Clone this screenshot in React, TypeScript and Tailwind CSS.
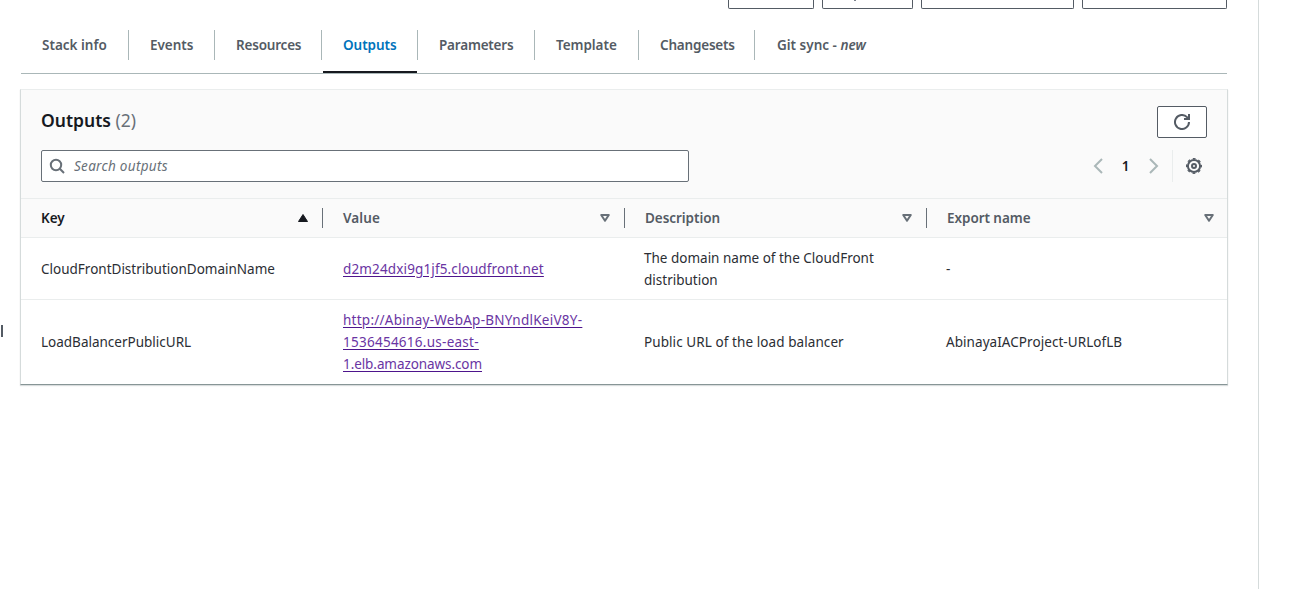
import React from "react";

const tabs = [
  { label: "Stack info", cell: "w-[108px]", text: "tracking-[0px]" },
  { label: "Events", cell: "w-[86px]", text: "tracking-[-0.05px]" },
  { label: "Resources", cell: "w-[107px]", text: "tracking-[-0.2px]" },
  { label: "Outputs", cell: "w-[96px]", text: "tracking-[-0.05px]", active: true },
  { label: "Parameters", cell: "w-[117px]", text: "tracking-[-0.2px]" },
  { label: "Template", cell: "w-[104px]", text: "tracking-[-0.05px]" },
  { label: "Changesets", cell: "w-[116px]", text: "tracking-[-0.2px]" },
];

const columns = [
  { label: "Key", text: "tracking-[-0.05px]" },
  { label: "Value", text: "tracking-[0.1px]" },
  { label: "Description", text: "tracking-[-0.05px]" },
  { label: "Export name", text: "tracking-[-0.05px]" },
];

function SortIcon({ active }: { active?: boolean }) {
  return active ? (
    <svg width="12" height="10" viewBox="0 0 12 10" className="shrink-0">
      <path d="M6 1.5 10.5 8.5h-9Z" fill="#16191f" stroke="#16191f" strokeLinejoin="round" />
    </svg>
  ) : (
    <svg width="12" height="10" viewBox="0 0 12 10" className="shrink-0">
      <path d="M2.2 2h7.6L6 7.8Z" fill="none" stroke="#687078" strokeWidth="2" strokeLinejoin="round" />
    </svg>
  );
}

function Gear() {
  return (
    <svg width="16" height="16" viewBox="0 0 16 16" fill="none" stroke="#545b64">
      <circle cx="8" cy="8" r="6.1" strokeWidth="2" />
      <circle cx="8" cy="8" r="7.4" strokeWidth="1.2" strokeDasharray="2.9 2.911" strokeDashoffset="1.45" />
      <circle cx="8" cy="8" r="2" strokeWidth="2" />
    </svg>
  );
}

export default function App() {
  return (
    <div className="flex h-[589px] w-full overflow-hidden bg-white font-['Noto_Sans','Open_Sans',sans-serif] text-[13.5px] leading-[22px] text-[#16191f]">
      <div className="w-5 shrink-0 pl-px pt-[325px]">
        <div className="h-3 w-0.5 bg-[#545b64]" />
      </div>
      <main className="w-[1208px] shrink-0">
        <div className="flex h-[9px] justify-end gap-2 pr-px">
          <div className="w-[86px] rounded-b-[2px] border border-t-0 border-[#545b64]" />
          <div className="w-[91px] rounded-b-[2px] border border-t-0 border-[#545b64] pl-[31px]">
            <div className="h-px w-0.5 bg-[#7c828c]" />
          </div>
          <div className="w-[153px] rounded-b-[2px] border border-t-0 border-[#545b64]" />
          <div className="w-[145px] rounded-b-[2px] border border-t-0 border-[#545b64]" />
        </div>

        <nav className="ml-px mr-px flex h-[65px] border-b border-[#aab7b8] pt-[21px] font-semibold text-[#545b64]">
          {tabs.map((t) => (
            <div key={t.label} className={`${t.cell} flex shrink-0 flex-col`}>
              <div className="flex h-[30px] items-center whitespace-nowrap border-r border-[#aab7b8] pl-[21px]">
                <span className={`${t.text} ${t.active ? "text-[#0073bb]" : ""}`}>{t.label}</span>
              </div>
              {t.active && <div className="ml-[1px] mr-px mt-[11px] h-0.5 bg-[#16191f]" />}
            </div>
          ))}
          <div className="flex h-[30px] items-center whitespace-nowrap pl-[22px]">
            <span className="tracking-[0px]">
              Git sync - <em>new</em>
            </span>
          </div>
        </nav>

        <section className="mt-[15px] h-[296px] border border-x-[#d5dbdb] border-b-[#879596] border-t-[#eaeded] bg-white shadow-[0_1px_1px_rgba(0,28,36,0.15)]">
          <div className="h-[108px] bg-[#fafafa] px-5 pt-4">
            <div className="flex h-8 justify-between">
              <h2 className="-mt-0.5 text-[17.5px] font-semibold leading-[32px] tracking-[0px]">
                Outputs <span className="font-normal text-[#687078]">(2)</span>
              </h2>
              <button className="flex h-8 w-[50px] items-center justify-center rounded-[2px] border border-[#545b64] bg-white">
                <svg width="16" height="16" viewBox="0 0 16 16" fill="none" stroke="#545b64" strokeWidth="2">
                  <path d="M15 8a7 7 0 1 1-2-4.9L14.5 5" />
                  <path d="M15 0v5h-5" />
                </svg>
              </button>
            </div>
            <div className="mt-3 flex h-8 justify-between">
              <div className="flex w-[648px] items-center rounded-[2px] border border-[#687078] bg-white pl-[7px]">
                <svg width="16" height="16" viewBox="0 0 16 16" fill="none" stroke="#687078" strokeWidth="2">
                  <circle cx="7" cy="7" r="5.2" />
                  <path d="m10.8 10.8 4.2 4.2" />
                </svg>
                <span className="ml-[9px] italic tracking-[0.3px] text-[#687078]">Search outputs</span>
              </div>
              <div className="flex items-center pr-[5px]">
                <svg width="10" height="16" viewBox="0 0 10 16" fill="none" stroke="#aab7b8" strokeWidth="2">
                  <path d="M9 1 2 8l7 7" />
                </svg>
                <span className="ml-[18px] w-[9px] text-center font-semibold">1</span>
                <svg className="ml-[19px]" width="10" height="16" viewBox="0 0 10 16" fill="none" stroke="#aab7b8" strokeWidth="2">
                  <path d="m1 1 7 7-7 7" />
                </svg>
                <span className="ml-[13px] mr-[13px] h-8 w-px bg-[#eaeded]" />
                <Gear />
              </div>
            </div>
          </div>

          <div className="grid h-10 grid-cols-[302px_302px_302px_300px] items-center border-y border-[#eaeded] bg-[#fafafa] font-semibold text-[#545b64]">
            {columns.map((c, i) => (
              <div
                key={c.label}
                className={`flex h-5 items-center justify-between pl-5 ${i < 3 ? "border-r border-[#687078] pr-[13px]" : "pr-3"} ${i === 0 ? "text-[#16191f]" : ""}`}
              >
                <span className={c.text}>{c.label}</span>
                <SortIcon active={i === 0} />
              </div>
            ))}
          </div>

          <div className="grid h-[62px] grid-cols-[302px_301px_302px_301px] items-center border-b border-[#eaeded] text-[#2b2e34]">
            <div className="pl-5">CloudFrontDistributionDomainName</div>
            <div className="pl-5">
              <a className="tracking-[0.14px] text-[#6a35a3] underline decoration-[#4d148c] underline-offset-2">
                d2m24dxi9g1jf5.cloudfront.net
              </a>
            </div>
            <div className="pl-5">
              The domain name of the CloudFront
              <br />
              distribution
            </div>
            <div className="pl-5">-</div>
          </div>
          <div className="grid h-[84px] grid-cols-[302px_301px_302px_301px] items-center text-[#2b2e34]">
            <div className="pl-5">LoadBalancerPublicURL</div>
            <div className="pl-5">
              <a className="text-[#6a35a3] underline decoration-[#4d148c] underline-offset-2">
                <span className="tracking-[0.26px]">http://Abinay-WebAp-BNYndlKeiV8Y-</span>
                <br />
                <span className="tracking-[0.26px]">1536454616.us-east-</span>
                <br />
                <span className="tracking-[-0.08px]">1.elb.amazonaws.com</span>
              </a>
            </div>
            <div className="pl-5 tracking-[0.08px]">Public URL of the load balancer</div>
            <div className="pl-5 tracking-[0.06px]">AbinayaIACProject-URLofLB</div>
          </div>
        </section>
      </main>
      <aside className="ml-[30px] flex-1 border-l border-[#d5dbdb]" />
    </div>
  );
}
